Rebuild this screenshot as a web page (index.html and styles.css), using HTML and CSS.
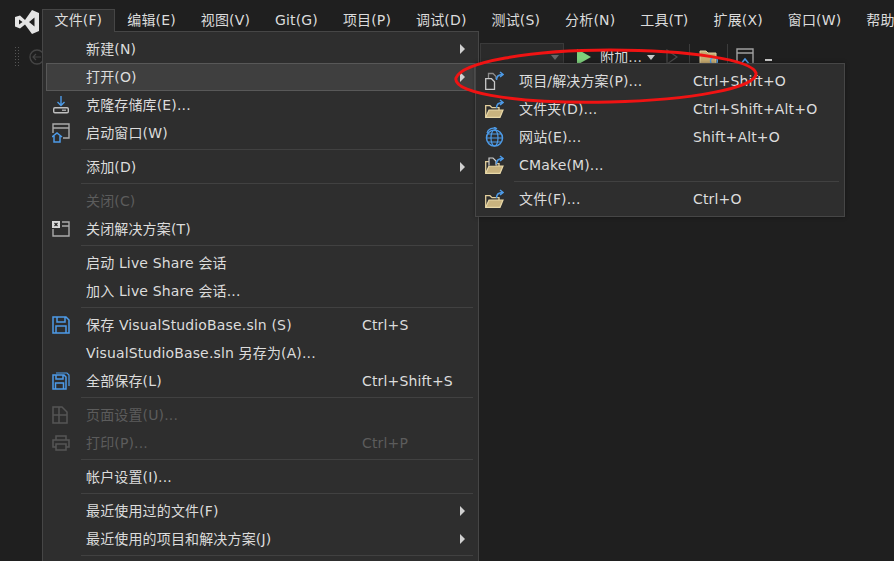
FILE: index.html
```html
<!DOCTYPE html>
<html lang="zh-CN">
<head>
<meta charset="utf-8">
<title>Visual Studio 文件菜单</title>
<link rel="stylesheet" href="styles.css">
</head>
<body>
<div class="app">
  <header class="menubar">
    <svg class="logo" width="24" height="24" viewBox="0 0 24 24"><path fill-rule="evenodd" fill="#e4e4e4" d="M0 7 5 5.500 10 10 17 0 24 3V21L17 24 10 14.500 5 18.500 0 16.500ZM4 9.500V14.500L7.500 12ZM14 12 19.500 16.500V7.500Z"/></svg>
    <nav class="menus">
      <span class="menu-title open">文件(F)</span>
      <span class="menu-title">编辑(E)</span>
      <span class="menu-title">视图(V)</span>
      <span class="menu-title">Git(G)</span>
      <span class="menu-title">项目(P)</span>
      <span class="menu-title">调试(D)</span>
      <span class="menu-title">测试(S)</span>
      <span class="menu-title">分析(N)</span>
      <span class="menu-title">工具(T)</span>
      <span class="menu-title">扩展(X)</span>
      <span class="menu-title">窗口(W)</span>
      <span class="menu-title">帮助(H)</span>
    </nav>
  </header>

  <div class="toolbar">
    <span class="grip"></span>
    <svg class="back" width="16" height="16" viewBox="0 0 16 16"><circle cx="8" cy="8" r="7" fill="none" stroke="#454545" stroke-width="1.4"/><path d="M12 8H4M7 5 4 8 7 11" fill="none" stroke="#454545" stroke-width="1.2"/></svg>
    <span class="combo"><i class="caret dim"></i></span>
    <svg class="play" width="14" height="16" viewBox="0 0 14 16"><path d="M0 0 14 8 0 16Z" fill="#7ed07c"/></svg>
    <span class="attach">附加...</span>
    <i class="caret"></i>
    <svg class="play-outline" width="12" height="16" viewBox="0 0 12 16"><path d="M1 1 11 8 1 15Z" fill="none" stroke="#4a4a4a" stroke-width="1.2"/></svg>
    <span class="tool-sep"></span>
    <svg class="tool-folder" width="19" height="18" viewBox="0 0 19 18"><path d="M1 3H7L9 5H17V16H1Z" fill="#c7ab70" stroke="#e0cf9f"/><circle cx="15" cy="13" r="3.5" fill="none" stroke="#4d9be8" stroke-width="1.4"/></svg>
    <span class="tool-sep tight"></span>
    <svg class="tool-start" width="18" height="18" viewBox="0 0 18 18"><path d="M1 17V1H17V17M1 5H17" fill="none" stroke="#a0a0a0" stroke-width="1.4"/><path d="M4 17 9 11 14 17" fill="none" stroke="#4d9be8" stroke-width="1.5"/></svg>
    <span class="tool-dash"></span>
  </div>

  <section class="menu main-menu">
    <div class="item"><span class="icon"></span><span class="label">新建(N)</span><span class="key"></span><i class="arrow"></i></div>
    <div class="item active"><span class="icon"></span><span class="label">打开(O)</span><span class="key"></span><i class="arrow"></i></div>
    <div class="item"><span class="icon"><svg width="18" height="18" viewBox="0 0 18 18"><path d="M9 0V9M5.5 6 9 9.5 12.5 6" fill="none" stroke="#4d9be8" stroke-width="1.4"/><rect x="1.7" y="11.7" width="14.6" height="5" rx="1.2" fill="none" stroke="#c0c0c0" stroke-width="1.4"/><path d="M10 14.2H14" stroke="#c0c0c0" stroke-width="1.2"/></svg></span><span class="label">克隆存储库(E)...</span><span class="key"></span></div>
    <div class="item"><span class="icon"><svg width="18" height="20" viewBox="0 0 18 20"><path d="M1 10V1H17V15H11M1 5H17" fill="none" stroke="#aaa" stroke-width="1.4"/><path d="M0 14 5 10 10 14M2 13V19H8V13" fill="none" stroke="#4d9be8" stroke-width="1.5"/></svg></span><span class="label">启动窗口(W)</span><span class="key"></span></div>
    <div class="sep"></div>
    <div class="item"><span class="icon"></span><span class="label">添加(D)</span><span class="key"></span><i class="arrow"></i></div>
    <div class="sep"></div>
    <div class="item off"><span class="icon"></span><span class="label">关闭(C)</span><span class="key"></span></div>
    <div class="item"><span class="icon"><svg width="18" height="16" viewBox="0 0 18 16"><path d="M10 1H17V15H1V8M10 5H17" fill="none" stroke="#aaa" stroke-width="1.4"/><rect x="0" y="0" width="8" height="7" fill="#d8d8d8"/><path d="M2.5 2 5.5 5M5.5 2 2.5 5" stroke="#222" stroke-width="1.1"/></svg></span><span class="label">关闭解决方案(T)</span><span class="key"></span></div>
    <div class="sep"></div>
    <div class="item"><span class="icon"></span><span class="label">启动 Live Share 会话</span><span class="key"></span></div>
    <div class="item"><span class="icon"></span><span class="label">加入 Live Share 会话...</span><span class="key"></span></div>
    <div class="sep"></div>
    <div class="item"><span class="icon"><svg width="18" height="18" viewBox="0 0 18 18"><path d="M1 1H14L17 4V17H1ZM5 1V6H13V1M4 17V10H14V17" fill="none" stroke="#4d9be8" stroke-width="1.5"/></svg></span><span class="label">保存 VisualStudioBase.sln (S)</span><span class="key">Ctrl+S</span></div>
    <div class="item"><span class="icon"></span><span class="label">VisualStudioBase.sln 另存为(A)...</span><span class="key"></span></div>
    <div class="item"><span class="icon"><svg width="18" height="18" viewBox="0 0 18 18"><path d="M1 3H12L14 5V17H1ZM4 3V7H11V3M3.500 17V11H11.500V17" fill="none" stroke="#4d9be8" stroke-width="1.500"/><path d="M4 1H15L17 3V14" fill="none" stroke="#4d9be8" stroke-width="1.200"/></svg></span><span class="label">全部保存(L)</span><span class="key">Ctrl+Shift+S</span></div>
    <div class="sep"></div>
    <div class="item off"><span class="icon"><svg width="16" height="18" viewBox="0 0 16 18"><path d="M1 1H10L15 6V17H1ZM1 9H15M7 1V17" fill="none" stroke="#555" stroke-width="1.500"/></svg></span><span class="label">页面设置(U)...</span><span class="key"></span></div>
    <div class="item off"><span class="icon"><svg width="18" height="16" viewBox="0 0 18 16"><path d="M4 5V1H14V5M4 12H1V5H17V12H14M4 9H14V15H4Z" fill="none" stroke="#555" stroke-width="1.500"/></svg></span><span class="label">打印(P)...</span><span class="key">Ctrl+P</span></div>
    <div class="sep"></div>
    <div class="item"><span class="icon"></span><span class="label">帐户设置(I)...</span><span class="key"></span></div>
    <div class="sep"></div>
    <div class="item"><span class="icon"></span><span class="label">最近使用过的文件(F)</span><span class="key"></span><i class="arrow"></i></div>
    <div class="item"><span class="icon"></span><span class="label">最近使用的项目和解决方案(J)</span><span class="key"></span><i class="arrow"></i></div>
    <div class="sep"></div>
  </section>

  <section class="menu sub-menu">
    <div class="item"><span class="icon"><svg width="19" height="20" viewBox="0 0 19 20"><path d="M3.500 7V2.500H8L11 5.500V8" fill="none" stroke="#8c8c8c" stroke-width="1.300"/><path d="M.700 7.700H6.500L9.500 10.700V18.300H.700Z" fill="#2e2e2e" stroke="#c8c8c8" stroke-width="1.300"/><use href="#up-arrow"/></svg></span><span class="label">项目/解决方案(P)...</span><span class="key">Ctrl+Shift+O</span></div>
    <div class="item"><span class="icon"><svg width="19" height="20" viewBox="0 0 19 20"><use href="#open-folder"/><use href="#up-arrow"/></svg></span><span class="label">文件夹(D)...</span><span class="key">Ctrl+Shift+Alt+O</span></div>
    <div class="item"><span class="icon"><svg width="20" height="20" viewBox="0 0 20 20"><circle cx="9.500" cy="11" r="8" fill="none" stroke="#4d9be8" stroke-width="1.500"/><ellipse cx="9.500" cy="11" rx="3.500" ry="8" fill="none" stroke="#4d9be8" stroke-width="1.200"/><path d="M1.500 11H17.500M3 7H16M3 15H16" stroke="#4d9be8" stroke-width="1.100"/><path d="M2 6C3 2 7 .5 11 1.500M9 0 11.500 1.500 9.500 4" fill="none" stroke="#4d9be8" stroke-width="1.200"/></svg></span><span class="label">网站(E)...</span><span class="key">Shift+Alt+O</span></div>
    <div class="item"><span class="icon"><svg width="19" height="20" viewBox="0 0 19 20"><use href="#open-folder"/><path d="M4 10.500V3H8L11 6V10.500" fill="#2e2e2e" stroke="#d0d0d0" stroke-width="1.200"/><use href="#up-arrow"/></svg></span><span class="label">CMake(M)...</span><span class="key"></span></div>
    <div class="sep"></div>
    <div class="item"><span class="icon"><svg width="19" height="20" viewBox="0 0 19 20"><use href="#open-folder"/><use href="#up-arrow"/></svg></span><span class="label">文件(F)...</span><span class="key">Ctrl+O</span></div>
  </section>

  <svg class="markup" width="894" height="561" viewBox="0 0 894 561"><path d="M456 78C462 62 530 50 610 50 690 50 752 60 756 73 758 88 690 100 610 102 530 104 452 95 456 78Z" fill="none" stroke="#f01313" stroke-width="3"/></svg>

  <svg class="defs" width="0" height="0"><defs>
    <g id="open-folder"><path d="M.700 18V6.700H5L7 8.700H14V11" fill="none" stroke="#e3cf9c" stroke-width="1.300"/><path d="M.700 18.300 4 11H18L15 18.300Z" fill="#c9b37f" stroke="#e8d8a8" stroke-width="1.200"/></g>
    <g id="up-arrow"><path d="M11.500 9C11.500 5.500 13.500 3.500 17.500 3.500M15 1 18 3.500 15 6" fill="none" stroke="#4d9be8" stroke-width="1.500"/></g>
  </defs></svg>
</div>
</body>
</html>
```
FILE: styles.css
```css
* { box-sizing: border-box; }
html, body { margin: 0; height: 100%; overflow: hidden; }
body {
  background: #1f1f1f;
  color: #dcdcdc;
  font: 14px/20px "DejaVu Sans", "Noto Sans CJK SC", sans-serif;
  letter-spacing: .15px;
}
.app { position: relative; width: 894px; height: 561px; overflow: hidden; }

.menubar { display: flex; height: 41px; padding: 9px 0 0 15px; }
.logo { margin: 1px 3px 0 0; flex: none; }
.menus { display: flex; height: 23px; white-space: nowrap; }
.menu-title { padding: 1px 12.5px 0; height: 23px; }
.menu-title.open {
  background: #2e2e2e;
  border: 1px solid #464646;
  border-bottom: 0;
  padding: 0 11.5px;
  position: relative;
  z-index: 3;
}

.toolbar { display: flex; align-items: center; height: 31px; padding: 1px 0 0 14px; }
.grip {
  width: 6px; height: 22px; margin-right: 9px;
  background-image: radial-gradient(#555 1px, transparent 1px);
  background-size: 3px 3px;
}
.back { margin-right: 19px; flex: none; }
.combo {
  width: 84px; height: 28px;
  background: #2a2a2a; position: absolute; left: 480px; top: 43px;
  border: 1px solid #3a3a3a;
  display: flex; align-items: center; justify-content: flex-end; padding-right: 4px;
}
.play { margin-left: 513px; margin-right: 9px; flex: none; }
.attach { width: 46px; }
.caret {
  width: 0; height: 0; margin: 0 11px 0 1px;
  border: 4px solid transparent; border-top: 5px solid #c8c8c8; border-bottom: 0;
}
.caret.dim { margin: 0; border-top-color: #666; }
.tool-sep { width: 1px; height: 26px; background: #3c3c3c; margin: 0 9px; flex: none; }
.tool-sep.tight { margin-right: 8px; }
.play-outline { flex: none; margin-right: 2px; }
.tool-dash { width: 7px; height: 2px; background: #c8c8c8; margin-left: 11px; margin-top: 6px; }

.menu {
  position: absolute;
  z-index: 2;
  background: #2e2e2e;
  border: 1px solid #464646;
  padding: 3px;
}
.main-menu { left: 42px; top: 31px; width: 437px; height: 540px; }
.sub-menu { left: 475px; top: 63px; width: 370px; box-shadow: 0 0 4px rgba(0,0,0,.35); z-index: 4; }

.item { display: flex; align-items: center; height: 28px; white-space: nowrap; position: relative; }
.item.active { background: #3f3f3f; outline: 1px solid #585858; outline-offset: -1px; }
.item.off { color: #5c5c5c; }
.icon { width: 40px; flex: none; display: flex; justify-content: flex-start; padding-left: 6px; }
.label { width: 276px; flex: none; }
.key { flex: 1; }
.sub-menu .label { width: 174px; }
.arrow {
  position: absolute; left: 414px; top: 9px;
  width: 0; height: 0;
  border: 5px solid transparent; border-left: 5px solid #d0d0d0; border-right: 0;
}
.sep { height: 6px; margin-left: 35px; margin-right: 2px; padding-top: 2px; }
.sep::before { content: ""; display: block; height: 1px; background: #414141; }

.markup { position: absolute; left: 0; top: 0; z-index: 5; pointer-events: none; }
.defs { position: absolute; }
```
